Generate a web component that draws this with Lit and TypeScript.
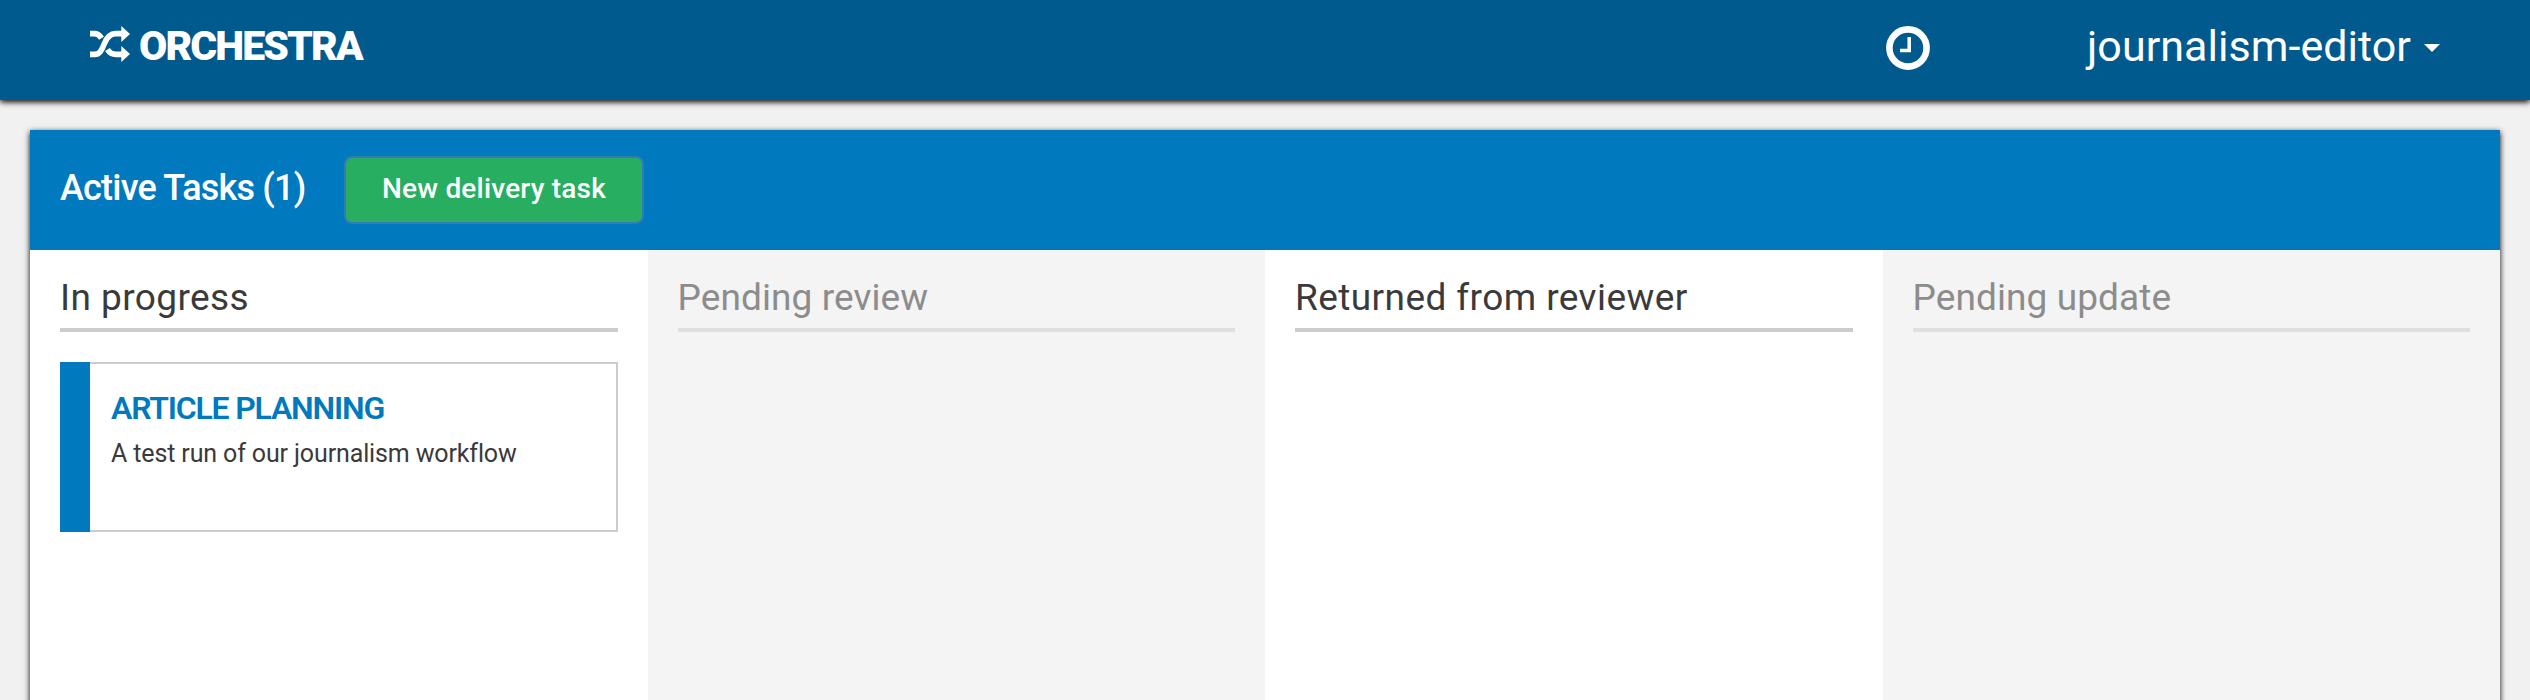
import { LitElement, html, css, svg } from "lit";

interface Task { title: string; description: string; }
interface Column { title: string; tasks: Task[]; muted: boolean; }

const columns: Column[] = [
  { title: "In progress", muted: false, tasks: [{ title: "ARTICLE PLANNING", description: "A test run of our journalism workflow" }] },
  { title: "Pending review", muted: true, tasks: [] },
  { title: "Returned from reviewer", muted: false, tasks: [] },
  { title: "Pending update", muted: true, tasks: [] },
];

const shuffleIcon = svg`<svg class="shuffle" viewBox="0 0 40 36" fill="none" stroke="#fff" stroke-width="5.6">
  <path d="M0 7.6h4.500c3.200 0 5.200 1.600 7 4.600M17.500 23.500c2.200 3.600 4.400 4.900 8.500 4.900h7"/>
  <path d="M0 28.400h4.500c4.800 0 7-3.400 9.700-10.400C17 10.800 20 7.600 25.500 7.600H33"/>
  <path d="M31.300 0 40 8l-8.700 8zM31.300 20l8.700 8-8.700 8z" fill="#fff" stroke="none"/></svg>`;

const clockIcon = svg`<svg class="clock" viewBox="0 0 44 44" fill="none" stroke="#fff">
  <circle cx="22" cy="22" r="18.600" stroke-width="6.600"/><path d="M23.200 11v13.500H14" stroke-width="3.500"/></svg>`;

class AppRoot extends LitElement {
  static styles = css`
    :host { display: block; height: 700px; overflow: hidden; background: #f1f1f1; color: #3a3a3a; font-family: Roboto, sans-serif; }
    * { box-sizing: border-box; }
    .nav { display: flex; align-items: flex-start; height: 100px; padding: 0 90px; background: #005a8e; color: #fff; box-shadow: 0 2px 6px #000; }
    .brand { display: flex; align-items: center; height: 92px; }
    .shuffle { width: 40px; height: 36px; margin: 0 9px 4px 0; }
    .name { font-size: 41px; font-weight: 900; letter-spacing: -1.9px; white-space: nowrap; }
    .clock { width: 44px; height: 44px; margin: 26px 157px 0 auto; }
    .user { display: flex; align-items: center; height: 91px; font-size: 43px; letter-spacing: 0.05px; }
    .caret { margin: 5px 0 0 13px; border: 8px solid transparent; border-top-color: #fff; border-bottom: 0; }
    .panel { height: 640px; margin: 30px 30px 0; background: #fff; box-shadow: 0 2px 6px #000; }
    .head { display: flex; align-items: center; height: 120px; padding-left: 30px; background: #0079bf; color: #fff; }
    .heading { width: 284px; padding-bottom: 5px; font-size: 36px; font-weight: 500; letter-spacing: -0.79px; white-space: nowrap; }
    .button { width: 300px; height: 68px; padding: 0 0 3px; border: 2px solid #337ab7; border-radius: 8px; background: #27ae60; color: #fff; font: inherit; font-size: 28px; font-weight: 500; letter-spacing: 0.2px; white-space: nowrap; }
    .columns { display: grid; grid-template-columns: repeat(4, minmax(0, 1fr)); height: 520px; }
    .column { padding: 20px 30px 0; }
    .muted { background: #f4f4f4; }
    .title { height: 62px; border-bottom: 4px solid #ccc; font-size: 37px; line-height: 55px; letter-spacing: 0.42px; white-space: nowrap; }
    .muted .title { color: #8c8c8c; border-color: #dfdfdf; letter-spacing: 0.1px; }
    .card { display: flex; height: 170px; margin-top: 30px; }
    .stripe { width: 30px; background: #0079bf; }
    .body { flex: 1; padding: 22px 0 0 21px; border: 2px solid #ccc; border-left: 0; white-space: nowrap; }
    .task { font-size: 32px; font-weight: 600; line-height: 45px; letter-spacing: -1.2px; color: #0079bf; }
    .text { font-size: 25px; line-height: 46px; letter-spacing: -0.13px; }
  `;
  render() {
    return html`
      <nav class="nav">
        <div class="brand">${shuffleIcon}<span class="name">ORCHESTRA</span></div>
        ${clockIcon}
        <div class="user"><span>journalism-editor</span><i class="caret"></i></div>
      </nav>
      <main class="panel">
        <header class="head">
          <div class="heading">Active Tasks (1)</div>
          <button class="button">New delivery task</button>
        </header>
        <div class="columns">${columns.map((c) => html`
          <section class="column ${c.muted ? "muted" : ""}">
            <div class="title">${c.title}</div>
            ${c.tasks.map((t) => html`
              <article class="card">
                <div class="stripe"></div>
                <div class="body"><div class="task">${t.title}</div><div class="text">${t.description}</div></div>
              </article>`)}
          </section>`)}</div>
      </main>`;
  }
}
customElements.define("app-root", AppRoot);
